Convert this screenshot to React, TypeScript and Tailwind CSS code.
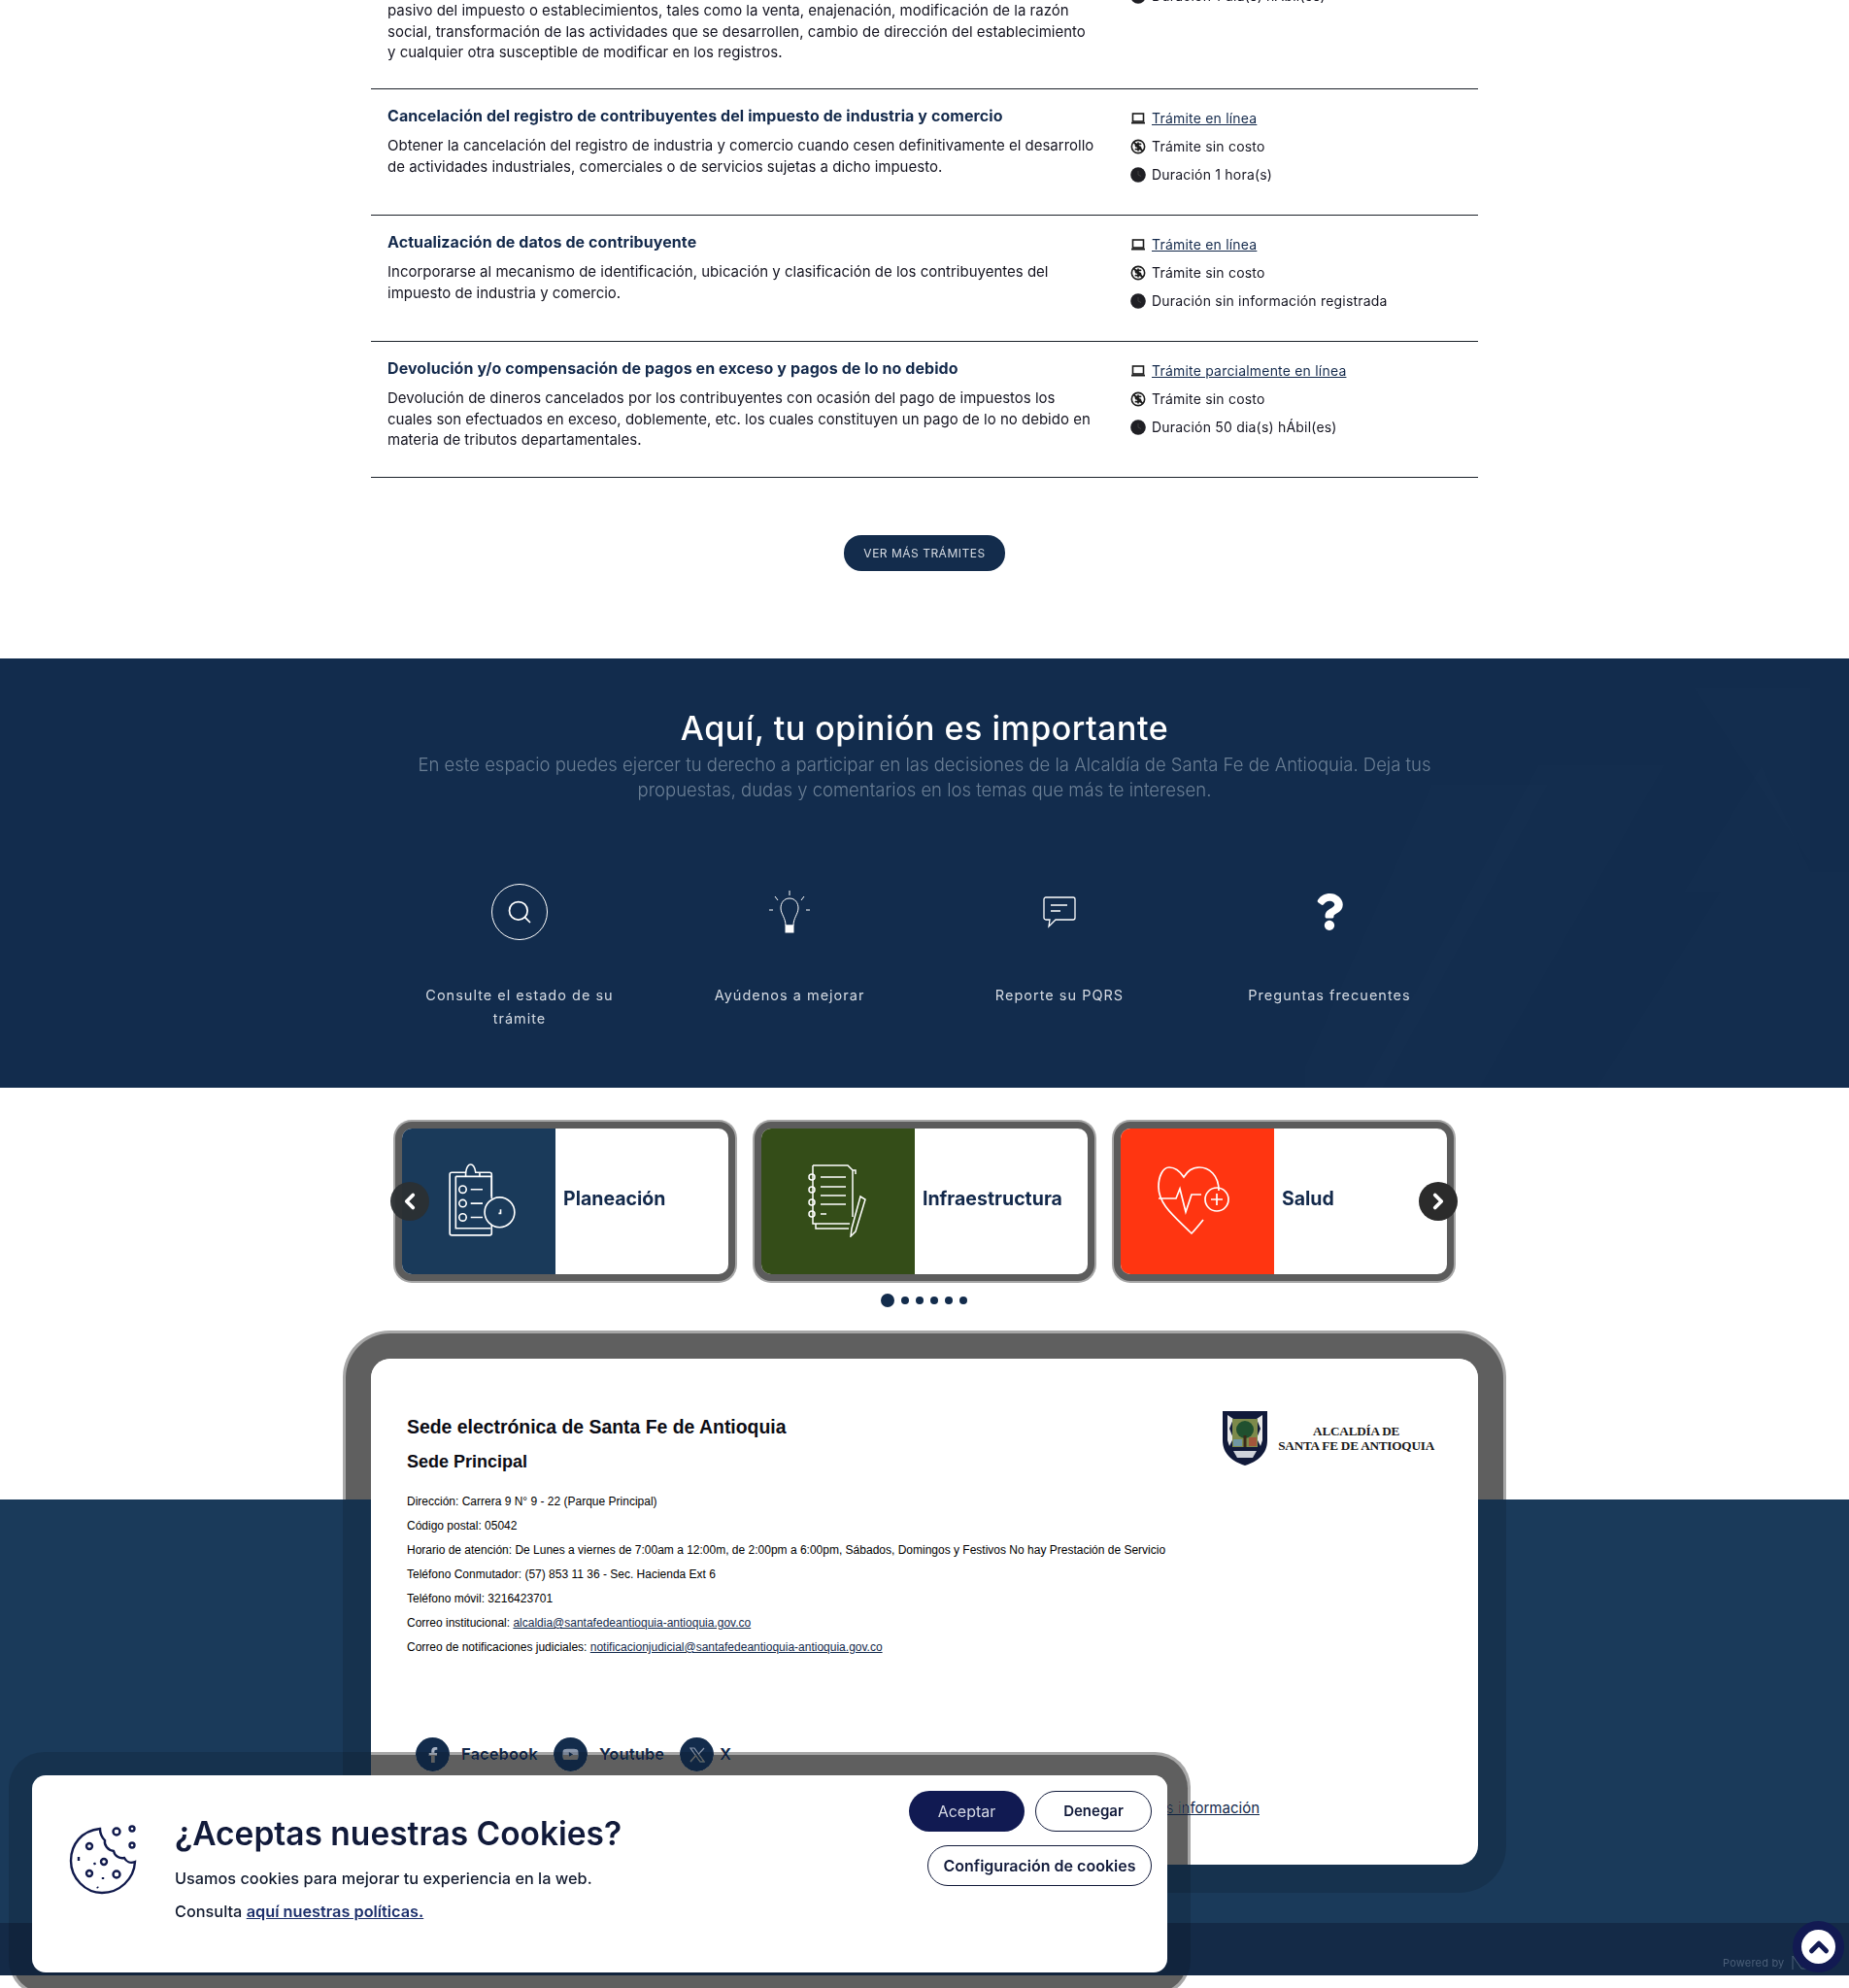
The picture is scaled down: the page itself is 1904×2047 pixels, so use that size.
import { CircleDollarSign, ChevronLeft, ChevronRight, ChevronUp, Search } from 'lucide-react';
import { FaFacebookF, FaQuestion, FaYoutube } from 'react-icons/fa';

const body = "font-['Inter',sans-serif]";

const rows = [
  {
    title: 'Cancelación del registro de contribuyentes del impuesto de industria y comercio',
    lines: [
      'Obtener la cancelación del registro de industria y comercio cuando cesen definitivamente el desarrollo',
      'de actividades industriales, comerciales o de servicios sujetas a dicho impuesto.',
    ],
    link: 'Trámite en línea',
    time: 'Duración 1 hora(s)',
    height: 'h-[130px]',
  },
  {
    title: 'Actualización de datos de contribuyente',
    lines: [
      'Incorporarse al mecanismo de identificación, ubicación y clasificación de los contribuyentes del',
      'impuesto de industria y comercio.',
    ],
    link: 'Trámite en línea',
    time: 'Duración sin información registrada',
    height: 'h-[130px]',
  },
  {
    title: 'Devolución y/o compensación de pagos en exceso y pagos de lo no debido',
    lines: [
      'Devolución de dineros cancelados por los contribuyentes con ocasión del pago de impuestos los',
      'cuales son efectuados en exceso, doblemente, etc. los cuales constituyen un pago de lo no debido en',
      'materia de tributos departamentales.',
    ],
    link: 'Trámite parcialmente en línea',
    time: 'Duración 50 dia(s) hÁbil(es)',
    height: 'h-[140px]',
  },
];

const contactLines = [
  'Dirección: Carrera 9 N° 9 - 22 (Parque Principal)',
  'Código postal: 05042',
  'Horario de atención: De Lunes a viernes de 7:00am a 12:00m, de 2:00pm a 6:00pm, Sábados, Domingos y Festivos No hay Prestación de Servicio',
  'Teléfono Conmutador: (57) 853 11 36 - Sec. Hacienda Ext 6',
  'Teléfono móvil: 3216423701',
];

const LaptopIcon = () => (
  <svg width="16" height="14" viewBox="0 0 16 14" fill="none" className="shrink-0">
    <rect x="2.5" y="2" width="11" height="8" stroke="#1b1b1b" strokeWidth="1.6" />
    <path d="M1 11.6h14" stroke="#1b1b1b" strokeWidth="1.8" />
  </svg>
);

const ClockIcon = () => (
  <svg width="16" height="16" viewBox="0 0 16 16" className="shrink-0">
    <circle cx="8" cy="8" r="7.8" fill="#1f1f24" />
    <path d="M8 4v4l3 1.5" stroke="#4a4a4a" strokeWidth="0.8" fill="none" />
  </svg>
);

const NoCostIcon = () => (
  <span className="relative shrink-0 w-4 h-4">
    <CircleDollarSign size={16} strokeWidth={2.4} color="#1b1b1b" />
    <span className="absolute left-[7px] top-[1px] h-[14px] w-[1.5px] -rotate-45 bg-[#1b1b1b]" />
  </span>
);

const InfoItem = ({ icon, children }: { icon: React.ReactNode; children: React.ReactNode }) => (
  <div className="flex items-center h-[29px] text-[14px] tracking-[0.2px] text-[#141420] whitespace-nowrap">
    <div className="w-[22px] flex">{icon}</div>
    {children}
  </div>
);

const TramiteRow = ({ row }: { row: (typeof rows)[number] }) => (
  <div className={`flex border-b border-[#1b2129] pl-[17px] pt-[17px] ${row.height}`}>
    <div className="w-[765px]">
      <h3 className="text-[16px] leading-[21px] font-bold tracking-[0.08px] text-[#13294b] whitespace-nowrap">{row.title}</h3>
      <div className="mt-[9px] text-[15px] leading-[21.6px] text-[#141420]">
        {row.lines.map((line) => (
          <p key={line} className="whitespace-nowrap">{line}</p>
        ))}
      </div>
    </div>
    <div className="-mt-[2px]">
      <InfoItem icon={<LaptopIcon />}>
        <a className="underline text-[#13294b]">{row.link}</a>
      </InfoItem>
      <InfoItem icon={<NoCostIcon />}>Trámite sin costo</InfoItem>
      <InfoItem icon={<ClockIcon />}>{row.time}</InfoItem>
    </div>
  </div>
);

const ClipboardIcon = () => (
  <svg width="78" height="78" viewBox="0 0 76 76" fill="none" stroke="#fff" strokeWidth="1.6" className="ml-[5px]">
    <path d="M8 10h14c1-6 3-8 5-8s4 2 5 8h14a2 2 0 0 1 2 2v24M48 60v11a2 2 0 0 1-2 2H8a2 2 0 0 1-2-2V12a2 2 0 0 1 2-2" />
    <path d="M12 14h36v20M47 66H12V14M22 10v4M36 10v4" />
    <circle cx="19" cy="27" r="3.6" />
    <circle cx="19" cy="41" r="3.6" />
    <circle cx="19" cy="55" r="3.6" />
    <path d="M27 27h12M27 41h12M27 55h12" />
    <circle cx="56" cy="50" r="15" fill="#1a3a5a" />
    <path d="M57 47v4h-2" />
  </svg>
);

const NotebookIcon = () => (
  <svg width="76" height="76" viewBox="0 0 76 76" fill="none" stroke="#fff" strokeWidth="1.5">
    <path d="M12 2h36l5 5v48M12 2v60h38M15 62v5h34M53 7h3v4" />
    <circle cx="11" cy="14" r="3" />
    <circle cx="11" cy="27" r="3" />
    <circle cx="11" cy="40" r="3" />
    <circle cx="11" cy="52" r="3" />
    <path d="M20 14h26M20 24h26M20 33h26M20 42h26M20 52h6" />
    <path d="M61 34l5 3-10 33-5 5 1-8z" />
  </svg>
);

const HeartIcon = () => (
  <svg width="88" height="76" viewBox="0 0 88 76" fill="none" stroke="#fff" strokeWidth="1.7" className="ml-[4px]">
    <path d="M64 28C64 12 54 4 44 4c-8 0-12 4-16 10C24 8 18 4 13 4 6 4 2 14 2 24c0 18 16 30 34 48 4-4 8-9 12-14" />
    <path d="M2 36h18l4-10 6 24 6-18h10" />
    <circle cx="62" cy="37" r="12" />
    <path d="M62 31v12M56 37h12" />
  </svg>
);

const cards = [
  { label: 'Planeación', color: 'bg-[#1a3a5a]', icon: <ClipboardIcon /> },
  { label: 'Infraestructura', color: 'bg-[#344d18]', icon: <NotebookIcon /> },
  { label: 'Salud', color: 'bg-[#ff3511]', icon: <HeartIcon /> },
];

const opinions = [
  {
    label: 'Consulte el estado de su trámite',
    icon: (
      <div className="w-[58px] h-[58px] rounded-full border border-white flex items-center justify-center">
        <Search size={28} strokeWidth={1.5} color="#fff" />
      </div>
    ),
  },
  {
    label: 'Ayúdenos a mejorar',
    icon: (
      <svg width="44" height="44" viewBox="0 0 44 44" fill="none" stroke="#fff" strokeWidth="1">
        <path d="M22 0v5M7 6l3 4M37 6l-3 4M1 20h4M39 20h4" />
        <path d="M22 8c-6 0-9 5-9 10 0 6 5 10 5 18h8c0-8 5-12 5-18 0-5-3-10-9-10z" />
        <rect x="18" y="36" width="8" height="7" fill="#fff" />
      </svg>
    ),
  },
  {
    label: 'Reporte su PQRS',
    icon: (
      <svg width="36" height="34" viewBox="0 0 36 34" fill="none" stroke="#fff" strokeWidth="1.3">
        <path d="M4 2h28a2 2 0 0 1 2 2v19a2 2 0 0 1-2 2H14l-7 7 1-7H4a2 2 0 0 1-2-2V4a2 2 0 0 1 2-2z" />
        <path d="M9 10h17M9 16h10" />
      </svg>
    ),
  },
  {
    label: 'Preguntas frecuentes',
    icon: <FaQuestion size={38} color="#fff" />,
  },
];

const XIcon = () => (
  <svg width="18" height="18" viewBox="0 0 18 18" fill="none" stroke="#8b98ad" strokeWidth="1.2">
    <path d="M2 2h4l10 14h-4zM16 2L10 8.5M2 16l6-7" />
  </svg>
);

const CookieIcon = () => (
  <svg width="74" height="74" viewBox="0 0 74 74" fill="none" stroke="#111a4c" strokeWidth="2.4">
    <path d="M33 6C14 8 3 22 3 39c0 18 15 33 32 33 18 0 33-14 34-32-5 2-9 0-11-4-5 1-10-2-11-7-6-1-10-6-9-11-3-3-5-8-5-12z" />
    <circle cx="50" cy="9" r="3.5" />
    <circle cx="66" cy="6" r="2.5" />
    <circle cx="66" cy="23" r="2.5" />
    <circle cx="22" cy="24" r="3" />
    <circle cx="37" cy="40" r="3" />
    <circle cx="22" cy="52" r="3" />
    <circle cx="50" cy="53" r="3.5" />
    <path d="M11 35v4M27 41l1 2M36 56v2M30 66l1 1" />
  </svg>
);

const Shield = () => (
  <svg width="48" height="58" viewBox="0 0 48 58">
    <path d="M1 1h46v30c0 14-10 22-23 26C11 53 1 45 1 31z" fill="#111a3a" />
    <path d="M6 5l6 4-4 10 4 10-4 8-2-6z M42 5l-6 4 4 10-4 10 4 8 2-6z" fill="#e8e8e8" />
    <rect x="11" y="9" width="26" height="29" fill="#7d8a4b" />
    <circle cx="24" cy="20" r="9" fill="#20502f" />
    <rect x="22.5" y="26" width="3" height="12" fill="#3b2a1a" />
    <rect x="28" y="28" width="8" height="9" fill="#a2563c" />
    <rect x="12" y="30" width="9" height="7" fill="#6f97a3" />
    <path d="M12 42h24l-4 7H16z" fill="#cfd3da" />
  </svg>
);

export default function App() {
  return (
    <div className={`relative h-[2047px] overflow-hidden bg-white ${body}`}>
      {/* tramites */}
      <div className="w-[1140px] mx-auto">
        <div className="h-[92px] border-b border-[#1b2129] pl-[17px] flex">
          <div className="w-[765px] text-[15px] leading-[21.6px] text-[#141420]">
            <p className="whitespace-nowrap">pasivo del impuesto o establecimientos, tales como la venta, enajenación, modificación de la razón</p>
            <p className="whitespace-nowrap">social, transformación de las actividades que se desarrollen, cambio de dirección del establecimiento</p>
            <p className="whitespace-nowrap">y cualquier otra susceptible de modificar en los registros.</p>
          </div>
          <div className="-mt-[19px] h-[29px]">
            <InfoItem icon={<ClockIcon />}>Duración 1 dia(s) hÁbil(es)</InfoItem>
          </div>
        </div>
        {rows.map((row) => (
          <TramiteRow key={row.title} row={row} />
        ))}
        <div className="h-[186px] pt-[59px] flex justify-center">
          <a className="w-[166px] h-[37px] rounded-[18px] bg-[#132c4c] text-[#d8dde4] text-[12px] tracking-[0.5px] flex items-center justify-center">
            VER MÁS TRÁMITES
          </a>
        </div>
      </div>

      {/* opinion */}
      <section className="relative h-[442px] bg-[#122c4d] text-center overflow-hidden">
        <svg className="absolute right-0 top-0" width="560" height="442" viewBox="0 0 560 442" fill="#fff" fillOpacity="0.008">
          <path d="M400 30h120v180L400 30zM130 130h120L80 442H-10z" />
          <path d="M240 110h130L180 442H60zM470 110l60 130H390zM440 220h120v222H300zM470 350l60 92H410z" />
        </svg>
        <div className="relative">
          <h2 className="pt-[52px] text-[34px] leading-[40px] font-medium tracking-[0.5px] text-white">Aquí, tu opinión es importante</h2>
          <p className="mt-[4px] text-[18.5px] leading-[26px] font-light text-[#6b7f95]">
            En este espacio puedes ejercer tu derecho a participar en las decisiones de la Alcaldía de Santa Fe de Antioquia. Deja tus
            <br />
            propuestas, dudas y comentarios en los temas que más te interesen.
          </p>
          <div className="w-[1112px] mx-auto mt-[83px] grid grid-cols-4">
            {opinions.map((item) => (
              <div key={item.label} className="flex flex-col items-center">
                <div className="h-[60px] flex items-center justify-center">{item.icon}</div>
                <p className="mt-[44px] w-[220px] text-[14.5px] leading-[24px] tracking-[1px] text-[#d5dbe3]">{item.label}</p>
              </div>
            ))}
          </div>
        </div>
      </section>

      {/* carousel */}
      <div className="relative w-[1076px] mx-auto mt-[42px] flex gap-[34px]">
        {cards.map((card) => (
          <div key={card.label} className="w-[336px] h-[150px] rounded-[10px] bg-white flex overflow-hidden shadow-[0_0_0_7px_#5c5c5c,0_0_0_9px_#a6a6a6]">
            <div className={`w-[158px] pb-[2px] flex items-center justify-center ${card.color}`}>{card.icon}</div>
            <div className="pl-[8px] pb-[5px] flex items-center text-[19.5px] font-bold text-[#13294b]">{card.label}</div>
          </div>
        ))}
        <div className="absolute left-[-12px] top-[55px] w-10 h-10 rounded-full bg-[#2b2f33]/95 flex items-center justify-center">
          <ChevronLeft size={26} strokeWidth={3.5} color="#fff" />
        </div>
        <div className="absolute right-[-11px] top-[55px] w-10 h-10 rounded-full bg-[#2b2b2b] flex items-center justify-center">
          <ChevronRight size={26} strokeWidth={3.5} color="#fff" />
        </div>
      </div>
      <div className="mt-[20px] h-[14px] flex items-center justify-center gap-[7px] -translate-x-[1px]">
        <span className="w-[14px] h-[14px] rounded-full bg-[#132c4c]" />
        {[0, 1, 2, 3, 4].map((dot) => (
          <span key={dot} className="w-[8px] h-[8px] rounded-full bg-[#132c4c]" />
        ))}
      </div>

      {/* footer */}
      <footer className="relative mt-[53px] h-[635px]">
        <div className="absolute inset-x-0 top-[145px] bottom-0 bg-[#1a3a5a]" />
        <div className="absolute inset-x-0 bottom-0 h-[54px] bg-[#142a47]" />
        <div className="relative w-[1140px] h-[521px] mx-auto">
          <div className="absolute inset-0 rounded-[20px] mix-blend-darken shadow-[0_0_0_26px_#6e6e6e,0_0_0_29px_#c0c0c0]" />
          <div className="absolute inset-0 rounded-[20px] shadow-[0_0_0_29px_rgba(0,0,0,0.13)]" />
          <div className="relative h-full rounded-[20px] bg-white px-[37px] font-['Liberation_Sans',sans-serif] text-black">
            <div className="absolute right-[45px] top-[53px] flex items-center gap-[10px]">
              <Shield />
              <div className="font-['Liberation_Serif',serif] font-bold text-[13.2px] leading-[15px] text-center text-[#1a1a1a] tracking-[-0.2px]">
                ALCALDÍA DE
                <br />
                SANTA FE DE ANTIOQUIA
              </div>
            </div>
            <h3 className="pt-[59px] text-[19.4px] leading-[22px] font-bold text-[#0c0c14]">Sede electrónica de Santa Fe de Antioquia</h3>
            <h4 className="mt-[14px] text-[18px] leading-[22px] font-bold text-[#0c0c14]">Sede Principal</h4>
            <div className="mt-[18px] text-[12px] leading-[25px]">
              {contactLines.map((line) => (
                <p key={line}>{line}</p>
              ))}
              <p>
                Correo institucional: <a className="underline text-[#13294b]">alcaldia@santafedeantioquia-antioquia.gov.co</a>
              </p>
              <p>
                Correo de notificaciones judiciales: <a className="underline text-[#13294b]">notificacionjudicial@santafedeantioquia-antioquia.gov.co</a>
              </p>
            </div>
            <div className={`absolute left-[46px] top-[390px] flex items-center text-[16.5px] font-bold text-[#13294b] ${body}`}>
              <span className="w-[35px] h-[35px] rounded-full bg-[#132c4c] flex items-center justify-center">
                <FaFacebookF size={16} color="#a8b3c4" />
              </span>
              <span className="ml-[12px] w-[95px]">Facebook</span>
              <span className="w-[35px] h-[35px] rounded-full bg-[#132c4c] flex items-center justify-center">
                <FaYoutube size={17} color="#8b98ad" />
              </span>
              <span className="ml-[12px] w-[83px]">Youtube</span>
              <span className="w-[35px] h-[35px] rounded-full bg-[#132c4c] flex items-center justify-center">
                <XIcon />
              </span>
              <span className="ml-[6px]">X</span>
            </div>
            <a className={`absolute right-[225px] top-[452px] text-[15px] underline text-[#13294b] ${body}`}>Más información</a>
          </div>
        </div>
      </footer>

      {/* powered by */}
      <div className="absolute left-[1774px] top-[2013px] flex items-center gap-[8px] text-[11px] tracking-[0.2px] text-[#4b5f78]">
        Powered by
        <svg width="18" height="16" viewBox="0 0 18 16" fill="none" stroke="#4b5f78" strokeWidth="1">
          <path d="M1 15V1l9 13h8M10 8h6" />
        </svg>
      </div>

      {/* volver arriba */}
      <div className="absolute left-[1846px] top-[1978px] w-[53px] h-[53px] rounded-full bg-[#121a52] flex items-center justify-center">
        <div className="w-[35px] h-[35px] rounded-full bg-white flex items-center justify-center">
          <ChevronUp size={30} strokeWidth={4} color="#121a52" />
        </div>
      </div>

      {/* cookies */}
      <div className="absolute left-[33px] top-[1828px] w-[1169px] h-[203px]">
        <div className="absolute inset-0 rounded-[14px] mix-blend-darken shadow-[0_0_0_21px_#6e6e6e,0_0_0_24px_#c0c0c0]" />
        <div className="absolute inset-0 rounded-[14px] shadow-[0_0_0_24px_rgba(0,0,0,0.13)]" />
        <div className="relative h-full rounded-[14px] bg-white flex">
          <div className="pl-[37px] pt-[49px] w-[147px]">
            <CookieIcon />
          </div>
          <div className="pt-[38px]">
            <h2 className="text-[33.5px] leading-[44px] font-semibold text-[#111a3a]">¿Aceptas nuestras Cookies?</h2>
            <p className="mt-[13px] text-[16.3px] leading-[22px] font-medium text-[#111a2e]">Usamos cookies para mejorar tu experiencia en la web.</p>
            <p className="mt-[12px] text-[16.3px] leading-[22px] font-medium text-[#111a2e]">
              Consulta <a className="underline text-[#1c2f6b] font-semibold">aquí nuestras políticas.</a>
            </p>
          </div>
          <div className="absolute right-[16px] top-[16px] flex flex-col items-end gap-[14px]">
            <div className="flex gap-[11px]">
              <button className="w-[119px] h-[42px] rounded-[21px] bg-[#111a52] text-[16px] text-[#d5d8e4]">Aceptar</button>
              <button className="w-[120px] h-[42px] rounded-[21px] border border-[#111a3a] text-[15px] font-semibold text-[#111a3a]">Denegar</button>
            </div>
            <button className="w-[231px] h-[42px] rounded-[21px] border border-[#111a3a] text-[16px] font-semibold text-[#111a3a]">Configuración de cookies</button>
          </div>
        </div>
      </div>
    </div>
  );
}
